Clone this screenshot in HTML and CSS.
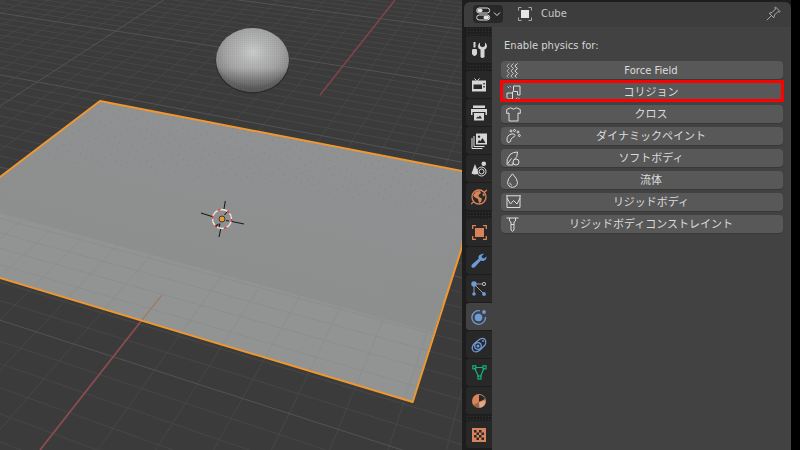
FILE: index.html
```html
<!DOCTYPE html>
<html lang="ja">
<head>
<meta charset="utf-8">
<title>Physics</title>
<link rel="stylesheet" href="styles.css">
</head>
<body>
<div class="app">
  <div class="viewport">
    <svg class="scene" width="462" height="450" viewBox="0 0 462 450">
      <defs>
        <radialGradient id="dome" gradientUnits="userSpaceOnUse" cx="253" cy="52" r="42" gradientTransform="translate(253 52) scale(1 .85) translate(-253 -52)">
          <stop offset="0" stop-color="#c9cbcb"/>
          <stop offset=".3" stop-color="#b4b5b5"/>
          <stop offset=".65" stop-color="#a3a3a3"/>
          <stop offset=".9" stop-color="#8c8c8c"/>
          <stop offset="1" stop-color="#747474"/>
        </radialGradient>
        <linearGradient id="domeBase" gradientUnits="userSpaceOnUse" x1="0" y1="68" x2="0" y2="92">
          <stop offset="0" stop-color="#4a4a4a" stop-opacity="0"/>
          <stop offset="1" stop-color="#4a4a4a" stop-opacity=".75"/>
        </linearGradient>
        <pattern id="dith" width="2" height="2" patternUnits="userSpaceOnUse">
          <rect width="1" height="1" fill="#000" opacity=".03"/>
          <rect x="1" y="1" width="1" height="1" fill="#fff" opacity=".03"/>
        </pattern>
        <pattern id="dots" width="12" height="9" patternUnits="userSpaceOnUse" patternTransform="rotate(11)">
          <rect width="1" height="1" fill="#77797b"/>
          <rect x="6" y="4" width="1" height="1" fill="#7c7e80"/>
        </pattern>
        <pattern id="dense" width="3" height="3" patternUnits="userSpaceOnUse" patternTransform="rotate(15)">
          <rect width="1" height="1" fill="#7f8183"/>
        </pattern>
        <linearGradient id="upper" gradientUnits="userSpaceOnUse" x1="200" y1="110" x2="160" y2="260">
          <stop offset="0" stop-color="#909192"/>
          <stop offset="1" stop-color="#8d8f8f"/>
        </linearGradient>
        <clipPath id="lowerClip"><polygon points="0,213 432,332 412.7,402 0,278"/></clipPath>
        <clipPath id="upperClip"><polygon points="100,101 462,171 462,247 432,332 0,213 0,177"/></clipPath>
      </defs>
      <rect class="scene-bg" width="462" height="450"/>
      <g class="grid-minor"><g id="gridMinor"></g></g>
      <g class="grid-major"><g id="gridMajor"></g></g>
      <line class="axis axis-fade" x1="395" y1="0" x2="320" y2="95"/>
      <line class="axis" x1="142" y1="320" x2="40" y2="450"/>

      <polygon class="plane" points="100,101 462,171 462,247 412.7,402 0,278 0,177"/>
      <polygon fill="url(#upper)" points="100,101 462,171 462,247 432,332 0,213 0,177"/>
      <g clip-path="url(#upperClip)">
        <polygon fill="url(#dots)" opacity=".7" points="100,101 462,171 462,215 300,190 120,170 40,160"/>
        <polygon fill="url(#dense)" opacity=".3" points="380,285 462,240 432,332"/>
      </g>
      <g class="plane-grid" clip-path="url(#lowerClip)">
        <use href="#gridMinor"/>
      </g>
      <line class="axis-plane" x1="142" y1="320" x2="162" y2="295"/>
      <line class="plane-shadow" x1="443" y1="305" x2="423" y2="370"/>
      <polygon class="plane-edge" points="100,101 470,172.5 462,247 412.7,402 -10,275 -10,184.6"/>

      <ellipse class="dome-shadow" cx="252.5" cy="61.500" rx="37" ry="32"/>
      <ellipse cx="252.5" cy="60" rx="36.5" ry="32" fill="url(#dome)"/>
      <ellipse cx="252.5" cy="60" rx="36.5" ry="32" fill="url(#domeBase)"/>
      <ellipse cx="252.5" cy="60" rx="36.5" ry="32" fill="url(#dith)"/>

      <g class="cursor">
        <circle class="cursor-white" cx="222" cy="219" r="9.5"/>
        <circle class="cursor-red" cx="222" cy="219" r="9.5"/>
        <path class="cursor-hair" d="M225.3 201 224 209M201 213 212 216.5M244 224 232 221.500M219 237 220.700 229M224.500 215 227 212M218.500 224 216 226M226 220.500 229 221M220 223.500 219 227"/>
        <circle class="cursor-dot" cx="222" cy="219" r="3"/>
      </g>
    </svg>
  </div>

  <div class="props">
    <div class="panel">
      <div class="hdr">
        <div class="editor-btn">
          <svg width="16" height="14" viewBox="0 0 16 14"><rect class="i-w" x=".7" y="1" width="13" height="5" rx="2.500"/><rect class="i-f" x="1.500" y="1.800" width="5" height="3.400" rx="1.700"/><rect class="i-w" x=".7" y="8" width="13" height="5" rx="2.500"/><rect class="i-f" x="7.500" y="8.800" width="5.500" height="3.400" rx="1.700"/></svg>
          <svg width="8" height="6" viewBox="0 0 8 6"><path class="i-w" d="M1 1.500 4 4.500 7 1.500"/></svg>
        </div>
        <svg class="hdr-obj" width="14" height="14" viewBox="0 0 14 14"><path class="i-dim" d="M.5 3.500V.5H3.500M10.500.5H13.500V3.500M.5 10.500V13.500H3.500M10.500 13.500H13.500V10.500"/><rect class="i-f" x="3" y="3" width="8" height="8"/></svg>
        <span class="hdr-name">Cube</span>
        <svg class="pin" width="15" height="15" viewBox="0 0 15 15"><path class="i-dim" d="M.8 14.200 5.500 9.500M3.200 7.200 6 6.500 9.500 3 8.800 1.500 9.500 1 14 5.500 13.500 6.200 12 5.500 8.500 9 7.800 11.800Z"/></svg>
      </div>
      <div class="body">
        <div class="tabs">
          <div class="tab-gap tab-gap-top"></div>
          <div class="tab">
            <svg width="16" height="16" viewBox="0 0 16 16"><path class="i-fill" d="M2.500 0h2v5.500h-2ZM1.500 7h4l.5 1.500V12q-2.500 4-5 0V8.500Z"/><path class="i-fill" d="M9 .5 9 4l2.500 1.300L14 4V.5Q16 2 16 4.500 15.500 6.800 13.500 7.500V15q-2 2-4 0V7.500Q7 6.800 7 4.500 7 2 9 .5Z"/></svg>
          </div>
          <div class="tab-gap tab-gap-s"></div>
          <div class="tab">
            <svg width="16" height="14" viewBox="0 0 16 14"><path class="i-fill" fill-rule="evenodd" d="M1 2.500h14V13.500H1ZM2.500 6.500v4.500h8.500V6.500ZM12.300 5h1.500V6.500H12.300ZM12.300 8h1.500V9.500H12.300Z"/><path class="i-w" d="M3.500 .5 5.500 2.500M8.500 .5 6.500 2.500"/></svg>
          </div>
          <div class="tab">
            <svg width="16" height="16" viewBox="0 0 16 16"><path class="i-fill" fill-rule="evenodd" d="M2 .5h12V3H2ZM0 4h16v6h-1.500V7H1.500V10H0ZM3 8h10V15.500H3ZM5 13.500h6L9 10.500 7.500 12.200 6.700 11.500Z"/></svg>
          </div>
          <div class="tab">
            <svg width="16" height="16" viewBox="0 0 16 16"><path class="i-w" d="M1 5v10.500h10.500M3 3V13.500H13.500"/><path class="i-fill" fill-rule="evenodd" d="M5 .5h11V11.500H5ZM6.500 10h8L11.500 5 9.500 8 8 7ZM8 2.500a1.200 1.200 0 1 0 .01 0Z"/></svg>
          </div>
          <div class="tab">
            <svg width="16" height="16" viewBox="0 0 16 16"><path class="i-fill" d="M4 3 7.500 12.500Q4 14.500 .5 12.500Z"/><circle class="i-fill" cx="12.800" cy="2.800" r="2.300"/><circle class="i-w" cx="10.500" cy="10.500" r="4.500"/><circle class="i-w" cx="10.500" cy="10.500" r="2.500"/></svg>
          </div>
          <div class="tab">
            <svg width="16" height="16" viewBox="0 0 16 16"><circle class="i-or" cx="8" cy="8" r="7"/><path class="i-orf" d="M5 2.500 9 2 10 4 7.500 6 8 8 11 9.500 10 13 8 14 7 10 4 8.500 2 6.500ZM12 4 14 6 13 7.500 11.500 6Z"/><path class="i-or" d="M0 15 3 12.500M16 1 13 3.500"/></svg>
          </div>
          <div class="tab-gap tab-gap-m"></div>
          <div class="tab">
            <svg width="15" height="15" viewBox="0 0 15 15"><path class="i-or" d="M.7 4V.7H4M11 .7H14.300V4M.7 11V14.300H4M11 14.300H14.300V11"/><rect class="i-orf" x="3" y="3" width="9" height="9"/></svg>
          </div>
          <div class="tab">
            <svg width="16" height="16" viewBox="0 0 16 16"><path class="i-bf" d="M15.500 3.500Q15.800 7 12.500 8 11 8.300 9.800 7.600L4 14Q2 15.500 .8 14.200-.2 12.500 1.500 11L7.700 5.700Q7 4 8.300 2.300 10 .3 13 .7L10.500 3.300 11.300 5 13 5.500Z"/></svg>
          </div>
          <div class="tab">
            <svg width="16" height="16" viewBox="0 0 16 16"><path class="i-gray" d="M3 3H11M3 3 3 13M3 3 13 13"/><circle class="i-bf" cx="3" cy="3" r="2.700"/><circle class="i-w-soft" cx="13" cy="3" r="1.600"/><circle class="i-bf" cx="3" cy="13" r="1.800"/><circle class="i-bf" cx="13" cy="13" r="1.900"/></svg>
          </div>
          <div class="tab tab-active">
            <svg width="16" height="16" viewBox="0 0 16 16"><path class="i-bl" d="M9 1.800A6.800 6.800 0 1 0 14.500 8"/><circle class="i-bf" cx="7.500" cy="8.500" r="3.800"/><circle class="i-bf" cx="13" cy="3" r="1.900"/></svg>
          </div>
          <div class="tab">
            <svg width="16" height="16" viewBox="0 0 16 16"><path class="i-bl" d="M1.500 9.500Q.5 13 3 14.500 6 15.500 9 13L14 8Q15.500 5 14 2.500 12 .5 9 2L4 6Q2 7.500 1.500 9.500Z"/><circle class="i-bl" cx="7" cy="9" r="3.300"/><circle class="i-bf" cx="7" cy="9" r="1.500"/><circle class="i-bf" cx="12" cy="4" r="1"/></svg>
          </div>
          <div class="tab">
            <svg width="15" height="15" viewBox="0 0 15 15"><path class="i-gr" d="M3.500 2.500H11M2.500 3 6.500 11.500M12 3 8.500 11.500"/><rect class="i-gr" x=".8" y=".8" width="3" height="3"/><rect class="i-gr" x="11" y=".8" width="3" height="3"/><rect class="i-gr" x="6" y="11" width="3" height="3"/></svg>
          </div>
          <div class="tab">
            <svg width="16" height="16" viewBox="0 0 16 16"><circle class="i-orf" cx="8" cy="8" r="7"/><path class="i-dark" d="M8 2Q12.500 2 14 6L8 9Z"/><path class="i-dark" d="M8 9V15Q4 15 2.500 12Z" opacity=".35"/><path class="i-white-f" d="M8 9 14.500 8Q14.500 13 9 14.800Z" opacity=".35"/></svg>
          </div>
          <div class="tab-gap tab-gap-m2"></div>
          <div class="tab">
            <svg width="14" height="14" viewBox="0 0 14 14"><rect class="i-orf" width="14" height="14"/><path class="i-dark" d="M2 2H4.500V4.500H2ZM7 2H9.500V4.500H7ZM4.500 4.500H7V7H4.500ZM9.500 4.500H12V7H9.500ZM2 7H4.500V9.500H2ZM7 7H9.500V9.500H7ZM4.500 9.500H7V12H4.500ZM9.500 9.500H12V12H9.500Z"/></svg>
          </div>
        </div>
        <div class="main">
          <div class="main-title">Enable physics for:</div>
          <div class="btn-list">
            <div class="btn">
              <svg class="btn-ic" width="14" height="15" viewBox="0 0 14 15"><path class="i-faint" d="M3.500.5 .8 3 3.500 5.500 .8 8 3.500 10.500 .8 13 2.500 14.500"/><path class="i-mid" d="M7.500.5 4.800 3 7.500 5.500 4.800 8 7.500 10.500 4.800 13 6.500 14.500"/><path class="i-w" d="M11.500.5 8.800 3 11.500 5.500 8.800 8 11.500 10.500 8.800 13 10.500 14.500"/></svg>
              <span class="lat">Force Field</span>
            </div>
            <div class="btn btn-hl">
              <svg class="btn-ic" width="15" height="15" viewBox="0 0 15 15"><path class="i-w" d="M7.500 1H14V10H11.500V6.500H7.500ZM1 8H6.500V14H2.500L1 12.500ZM6.500 8V6.500"/><path class="i-mid" d="M1.500 1.500 3 3M3.500.8 5 2.300M10 14 11.500 12.500M12 14.500 13.500 13"/></svg>
              <span>コリジョン</span>
              <i class="hl-box"></i>
            </div>
            <div class="btn">
              <svg class="btn-ic" width="15" height="15" viewBox="0 0 15 15"><path class="i-w" d="M4.500.8 .7 2.500V6.500L3 6V14H12V6L14.300 6.500V2.500L10.500.8Q7.500 3.500 4.500.8Z"/></svg>
              <span>クロス</span>
            </div>
            <div class="btn">
              <svg class="btn-ic" width="15" height="15" viewBox="0 0 15 15"><path class="i-w" d="M1 11Q.5 8 3 6 5 5 7 4.800 9 5 9 6.500 8.500 8 6.500 8.500 4.500 10 4.500 12.500 3 14 1.500 13Z"/><circle class="i-w" cx="5" cy="2" r="1"/><circle class="i-w" cx="8.500" cy="1.500" r="1"/><circle class="i-w" cx="12" cy="3" r="1"/><circle class="i-w" cx="13.300" cy="6.500" r="1"/></svg>
              <span>ダイナミックペイント</span>
            </div>
            <div class="btn">
              <svg class="btn-ic" width="15" height="15" viewBox="0 0 15 15"><path class="i-w" d="M1 13.500Q0 8 4 3.500 7 1 11.500 1 12 6 7.500 9.500M1 13.500 5.500 7.500M1.500 14H7"/><circle class="i-w" cx="10" cy="11" r="3"/><path class="i-mid" d="M6 11.500 7.500 14"/></svg>
              <span>ソフトボディ</span>
            </div>
            <div class="btn">
              <svg class="btn-ic" width="13" height="15" viewBox="0 0 13 15"><path class="i-w" d="M6.500 .8Q1.500 6 1.500 9.500 2 14 6.500 14.300 11 14 11.500 9.500 11.500 6 6.500 .8Z"/><path class="i-mid" d="M3.800 9.500Q4 12 6 12.200"/></svg>
              <span>流体</span>
            </div>
            <div class="btn">
              <svg class="btn-ic" width="15" height="13" viewBox="0 0 15 13"><path class="i-w" d="M1 .5V12.500H14V.5M.2 .8H14.800M1 3 4.500 9 7.500 5.500 11 9 14 3"/></svg>
              <span>リジッドボディ</span>
            </div>
            <div class="btn">
              <svg class="btn-ic" width="13" height="15" viewBox="0 0 13 15"><path class="i-w" d="M.5 1H12.500M3.500 1V4L5 5M9.500 1V4L8 5M5 5V13Q6.500 15.500 8 13V5M5 7.500H8"/></svg>
              <span>リジッドボディコンストレイント</span>
            </div>
          </div>
        </div>
      </div>
    </div>
    <div class="edge"></div>
  </div>
</div>
<script src="grid.js"></script>
</body>
</html>
```

FILE: styles.css
```css
* { box-sizing: border-box; }
html, body { margin: 0; padding: 0; background: #1d1d1d; }
body {
  width: 800px;
  height: 450px;
  overflow: hidden;
  font-family: "DejaVu Sans", "Noto Sans CJK JP", sans-serif;
}
.app { display: flex; width: 800px; height: 450px; }
.viewport { width: 462px; height: 450px; flex: none; }
.scene { display: block; }
.scene-bg { fill: #3b3b3b; }
.grid-minor { stroke: #474747; stroke-width: .9; fill: none; }
.grid-major { stroke: #535353; stroke-width: 1; fill: none; }
.axis { stroke: #8c4b50; stroke-width: 1.8; }
.axis-fade { stroke: #7e4449; stroke-width: 1.6; }
.axis-plane { stroke: #a8705a; stroke-width: 1.200; }
.plane { fill: #929493; }
.plane-grid { stroke: #8b8d8d; stroke-width: .9; fill: none; }
.plane-shadow { stroke: #5c5e60; stroke-width: 1.200; }
.plane-edge { fill: none; stroke: #f0972f; stroke-width: 2; stroke-linejoin: round; }
.dome-shadow { fill: #2c2c2c; }
.cursor-white { fill: none; stroke: #e6e6e6; stroke-width: 1.300; }
.cursor-red { fill: none; stroke: #e5322e; stroke-width: 1.500; stroke-dasharray: 3 7; }
.cursor-hair { fill: none; stroke: #1a1a1a; stroke-width: 1.100; }
.cursor-dot { fill: #f0962e; stroke: #3a3a3a; stroke-width: 1; }

.props { flex: 1; display: flex; padding-top: 2px; background: #1d1d1d; }
.panel { width: 327px; margin-left: 2px; display: flex; flex-direction: column; }
.edge { width: 9px; background: #000; margin-top: -2px; }
.hdr {
  height: 25px;
  flex: none;
  display: flex;
  align-items: center;
  background: #3d3d3d;
  border-radius: 6px 6px 0 0;
  padding: 0 10px 2px 9px;
}
.editor-btn {
  width: 30px;
  height: 18px;
  display: flex;
  align-items: center;
  justify-content: center;
  gap: 1px;
  background: #282828;
  border-radius: 4px;
}
.hdr-obj { margin-left: 15px; }
.hdr-name { margin-left: 9px; font-size: 10px; color: #c6c6c6; flex: 1; }
.body { flex: 1; display: flex; min-height: 0; }
.tabs { width: 28px; flex: none; padding-left: 2px; background: #1d1d1d; display: flex; flex-direction: column; overflow: hidden; }
.tab {
  height: 27px;
  margin-bottom: 1px;
  flex: none;
  display: flex;
  align-items: center;
  justify-content: center;
  background: #282828;
  border-radius: 3px 0 0 3px;
}
.tab-active { background: #424242; }
.tab-gap {
  flex: none;
  background-color: #1f1f1f;
  background-image: radial-gradient(#333 .6px, transparent .7px);
  background-size: 3px 3px;
}
.tab-gap-top { height: 9px; }
.tab-gap-s { height: 7px; }
.tab-gap-m { height: 8px; }
.tab-gap-m2 { height: 6px; }
.main { flex: 1; background: #424242; padding: 0 8px 0 9px; }
.main-title { height: 34px; padding: 12px 0 0 3px; font-size: 10px; line-height: 14px; color: #d4d4d4; }
.btn-list { display: flex; flex-direction: column; gap: 4px; }
.btn {
  position: relative;
  height: 18px;
  display: flex;
  align-items: center;
  justify-content: center;
  padding: 1px 0 0 18px;
  background: #585858;
  border-radius: 4px;
  box-shadow: 0 1px 0 #373737;
  font-size: 11px;
  line-height: 17px;
  color: #dcdcdc;
}
.lat { font-size: 10px; }
.btn-ic { position: absolute; left: 5px; top: 2px; }
.hl-box { position: absolute; left: -1px; right: -1px; top: -3px; bottom: -1px; border: 3px solid #f00; }

.i-w, .i-dim, .i-faint, .i-mid, .i-gray, .i-or, .i-bl, .i-gr { fill: none; stroke-width: 1; }
.i-w { stroke: #dedede; }
.i-w-soft { fill: none; stroke: #bdbdbd; stroke-width: 1; }
.i-mid { stroke: #c4c4c4; }
.i-faint { stroke: #adadad; }
.i-dim { stroke: #a8a8a8; }
.i-gray { stroke: #9a9a9a; }
.i-f { fill: #e4e4e4; }
.i-fill { fill: #d6d6d6; }
.i-or { stroke: #d8845b; stroke-width: 1.300; }
.i-orf { fill: #d8845b; }
.i-bl { stroke: #6d9ad8; stroke-width: 1.300; }
.i-bf { fill: #6d9ad8; }
.i-gr { stroke: #16b082; stroke-width: 1.200; }
.i-dark { fill: #282828; }
.i-white-f { fill: #ededed; }
```

FILE: grid.js
```js
// Builds the floor grid of the 3D viewport from its two vanishing points.
(function () {
  var NS = "http://www.w3.org/2000/svg";
  var minor = document.getElementById("gridMinor");
  var major = document.getElementById("gridMajor");
  function add(x1, y1, x2, y2, isMajor) {
    var l = document.createElementNS(NS, "line");
    l.setAttribute("x1", x1.toFixed(1));
    l.setAttribute("y1", y1.toFixed(1));
    l.setAttribute("x2", x2.toFixed(1));
    l.setAttribute("y2", y2.toFixed(1));
    (isMajor ? major : minor).appendChild(l);
  }
  var ax = -1835, ay = -272, bx = 638, by = -308;
  for (var k = -40; k <= 56; k++) {
    var inv = 0.003205 - k * 0.000053;
    if (inv <= 0) continue;
    var y0 = 1 / inv - 299;
    var s = (y0 - ay) / (0 - ax);
    add(-5, ay + s * (-5 - ax), 470, ay + s * (470 - ax), ((k % 10) + 10) % 10 === 0);
  }
  for (var j = -34; j <= 14; j++) {
    if (j === 0) continue;
    var x = 40 + 58.3 * j;
    var y = 450 - 0.01456 * (x - 40);
    var t = (460 - by) / (y - by);
    add(bx, by, bx + (x - bx) * t, by + (y - by) * t, ((j % 10) + 10) % 10 === 0);
  }
})();
```
